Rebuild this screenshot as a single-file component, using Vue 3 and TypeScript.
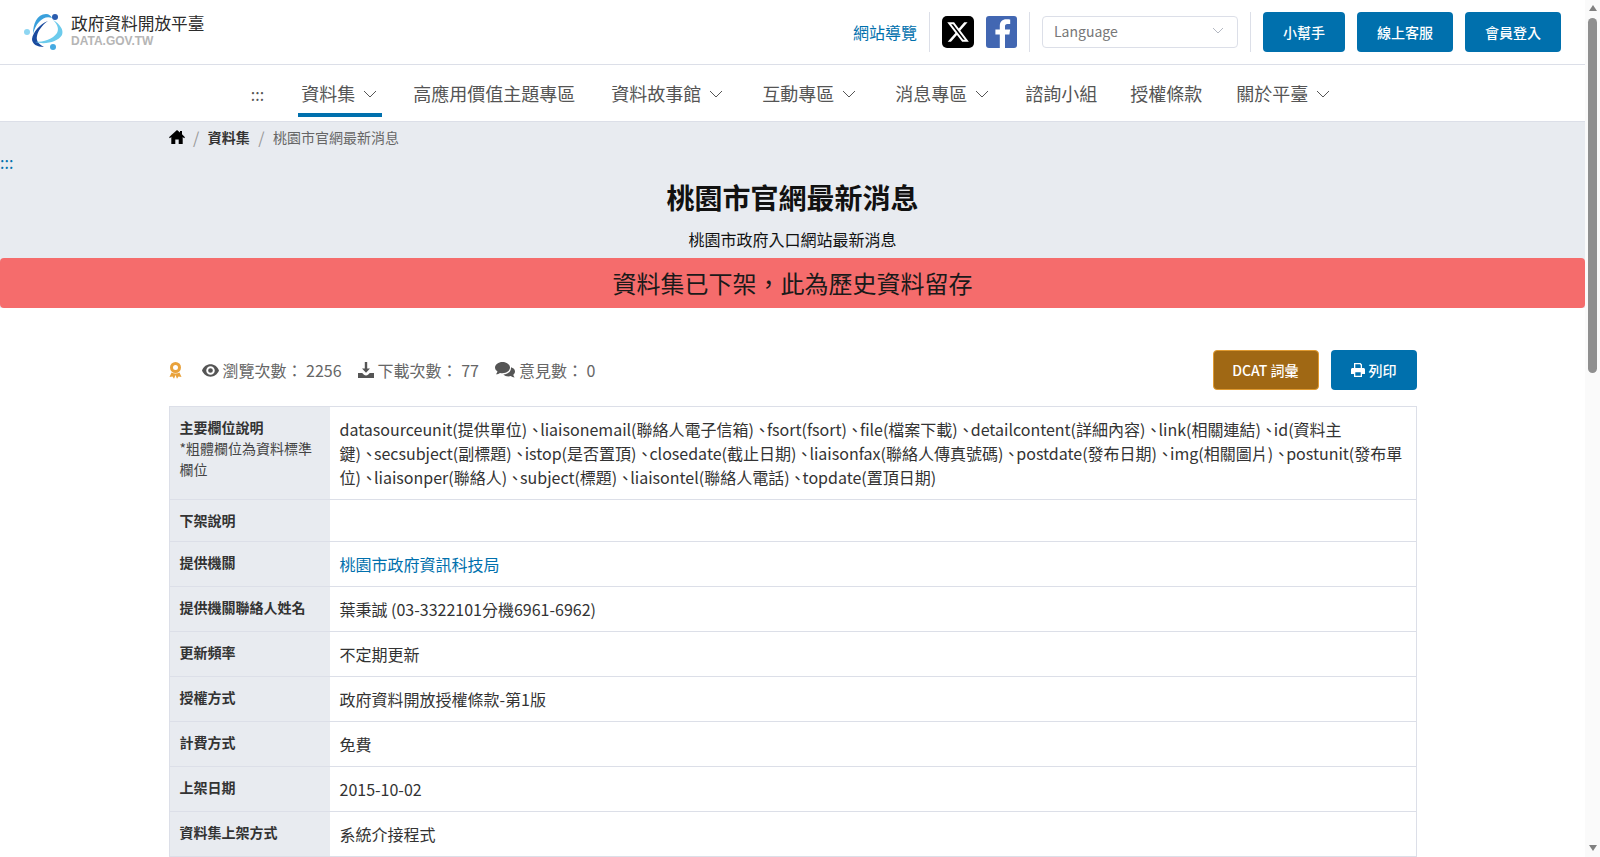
<script setup lang="ts">
type NavItem = { label: string; caret?: boolean; active?: boolean };
type Row = { label: string; value: string; link?: boolean };

const navItems: NavItem[] = [
  { label: '資料集', caret: true, active: true },
  { label: '高應用價值主題專區' },
  { label: '資料故事館', caret: true },
  { label: '互動專區', caret: true },
  { label: '消息專區', caret: true },
  { label: '諮詢小組' },
  { label: '授權條款' },
  { label: '關於平臺', caret: true },
];

// each line is split on the separator so its narrower width can be styled
const fieldLines: string[][] = [
  ['datasourceunit(提供單位)', 'liaisonemail(聯絡人電子信箱)', 'fsort(fsort)', 'file(檔案下載)', 'detailcontent(詳細內容)', 'link(相關連結)', 'id(資料主'],
  ['鍵)', 'secsubject(副標題)', 'istop(是否置頂)', 'closedate(截止日期)', 'liaisonfax(聯絡人傳真號碼)', 'postdate(發布日期)', 'img(相關圖片)', 'postunit(發布單'],
  ['位)', 'liaisonper(聯絡人)', 'subject(標題)', 'liaisontel(聯絡人電話)', 'topdate(置頂日期)'],
];

const rows: Row[] = [
  { label: '下架說明', value: '' },
  { label: '提供機關', value: '桃園市政府資訊科技局', link: true },
  { label: '提供機關聯絡人姓名', value: '葉秉誠 (03-3322101分機6961-6962)' },
  { label: '更新頻率', value: '不定期更新' },
  { label: '授權方式', value: '政府資料開放授權條款-第1版' },
  { label: '計費方式', value: '免費' },
  { label: '上架日期', value: '2015-10-02' },
  { label: '資料集上架方式', value: '系統介接程式' },
];
</script>

<template>
  <div class="window">
    <div class="page">
      <header class="topbar">
        <a class="logo">
          <svg class="logo-mark" viewBox="15 7 54 50" width="54" height="50">
            <path d="M33 34C33 24 37 14 46 14c3 0 5 2 6 4-5-2-9 0-13 4-3 3-5 8-6 12Z" fill="#3aa0dc" />
            <path d="M48 21c-8 3-15 11-16 18 0 5 5 8 12 8-6-3-8-7-7-11 1-5 5-11 11-15Z" fill="#1a4a9e" />
            <path d="M35 42c10 3 23 0 27-7 2-5-2-11-9-15 5 5 6 9 4 13-4 6-13 9-22 9Z" fill="#6ccbec" />
            <circle cx="55" cy="17" r="3" fill="#2a5cae" />
            <circle cx="27" cy="32" r="3" fill="#8ed6f2" />
            <circle cx="53" cy="47" r="3" fill="#45aae2" />
          </svg>
          <span class="logo-text">
            <span class="logo-name">政府資料開放平臺</span>
            <span class="logo-en">DATA.GOV.TW</span>
          </span>
        </a>
        <div class="top-actions">
          <a class="sitemap">網站導覽</a>
          <span class="divider"></span>
          <div class="socials">
            <svg width="32" height="32" viewBox="0 0 32 32">
              <rect width="32" height="32" rx="5" fill="#000" />
              <path transform="translate(4 4)" d="M18.244 2.250h3.308l-7.227 8.260 8.502 11.240H16.170l-5.214-6.817L4.990 21.750H1.680l7.730-8.835L1.254 2.250H8.080l4.713 6.231zm-1.161 17.520h1.833L7.084 4.126H5.117z" fill="#fff" />
            </svg>
            <svg width="31" height="32" viewBox="0 0 31 32">
              <rect width="31" height="32" rx="3" fill="#4267b2" />
              <path d="M19 32V18.500h4.400l.7-5H19v-3.200c0-1.500.4-2.400 2.500-2.400h2.700V3.400c-.5-.1-2-.2-3.900-.2-3.900 0-6.500 2.400-6.500 6.700v3.600H9.400v5h4.400V32H19Z" fill="#fff" />
            </svg>
          </div>
          <span class="divider"></span>
          <div class="lang">
            <span>Language</span>
            <svg width="12" height="7" viewBox="0 0 12 7"><path d="M1 1l5 5 5-5" fill="none" stroke="#b4b8c2" stroke-width="1" /></svg>
          </div>
          <span class="divider"></span>
          <div class="top-buttons">
            <a class="btn btn-small">小幫手</a>
            <a class="btn">線上客服</a>
            <a class="btn">會員登入</a>
          </div>
        </div>
      </header>

      <nav class="mainnav">
        <a class="accesskey nav-key">:::</a>
        <a v-for="item in navItems" :key="item.label" class="nav-item" :class="{ active: item.active, 'has-caret': item.caret }">
          {{ item.label }}
          <svg v-if="item.caret" class="caret" width="14" height="8" viewBox="0 0 14 8"><path d="M1 1l6 6 6-6" fill="none" stroke="#555" stroke-width="1" /></svg>
        </a>
      </nav>

      <section class="hero">
        <div class="container">
          <ol class="crumbs">
            <li>
              <svg class="home" width="16" height="14" viewBox="0 0 16 14"><path d="M8 0 0 7.200l.9 1L2.300 7v7h4V9.500h3.400V14h4V7l1.400 1.200.9-1L13 4.300V1h-2v1.500L8 0Z" fill="#000" /></svg>
            </li>
            <li class="sep">/</li>
            <li class="strong">資料集</li>
            <li class="sep">/</li>
            <li class="muted">桃園市官網最新消息</li>
          </ol>
        </div>
        <a class="accesskey hero-key">:::</a>
        <h1>桃園市官網最新消息</h1>
        <p class="subtitle">桃園市政府入口網站最新消息</p>
        <div class="alert">資料集已下架，此為歷史資料留存</div>
      </section>

      <main class="container content">
        <div class="meta">
          <div class="stats">
            <svg class="medal" width="13" height="17" viewBox="0 0 13 17">
              <circle cx="6.500" cy="5.500" r="4" fill="none" stroke="#e9a23b" stroke-width="3" />
              <path d="M2.500 10.500.5 15l3-.5 1.500 2.200L6.500 13 8 16.700l1.500-2.200 3 .5-2-4.500c-2.500 1.300-5.500 1.300-8 0Z" fill="#e9a23b" />
            </svg>
            <span class="stat">
              <svg width="17" height="13" viewBox="0 0 18 13"><path d="M9 0C5 0 1.800 2.400 0 6.500 1.800 10.600 5 13 9 13s7.200-2.400 9-6.500C16.200 2.400 13 0 9 0Zm0 11a4.500 4.500 0 1 1 0-9 4.500 4.500 0 0 1 0 9Zm0-7a2.500 2.500 0 1 0 0 5 2.500 2.500 0 0 0 0-5Z" fill="#555" /></svg>
              瀏覽次數： 2256
            </span>
            <span class="stat">
              <svg width="16" height="16" viewBox="0 0 16 16"><path d="M6.800 0h2.400v6.500H12L8 10.800 4 6.500h2.800V0ZM0 11h4.200L6 12.700c1 1 3 1 4 0l1.800-1.700H16v5H0v-5Z" fill="#555" /></svg>
              下載次數： 77
            </span>
            <span class="stat">
              <svg width="20" height="16" viewBox="0 0 20 16">
                <path d="M7.500 0C11.600 0 15 2.500 15 5.600s-3.400 5.600-7.500 5.600c-.9 0-1.700-.1-2.500-.3-1 .8-2.400 1.300-4 1.300.8-.9 1.300-1.800 1.500-2.700C.9 8.500 0 7.100 0 5.600 0 2.500 3.400 0 7.500 0Z" fill="#555" />
                <path d="M16 5.200c2.400.6 4 2.300 4 4.300 0 1.300-.7 2.500-1.800 3.300.2.900.7 1.700 1.400 2.700-1.500 0-2.900-.6-3.800-1.400-.7.200-1.500.3-2.300.3-2.100 0-4-.8-5.200-2 4.400-.1 8-2.800 7.700-7.200Z" fill="#555" />
              </svg>
              意見數： 0
            </span>
          </div>
          <div class="meta-buttons">
            <a class="btn btn-dcat">DCAT 詞彙</a>
            <a class="btn btn-print">
              <svg width="14" height="14" viewBox="0 0 14 14"><path d="M3 0h6.500L11 1.500V5h1.500c.8 0 1.500.7 1.500 1.500V11h-3v3H3v-3H0V6.500C0 5.700.7 5 1.500 5H3V0Zm1.300 1.300V5h5.400V2.200L8.800 1.300H4.300Zm0 8v3.400h5.400V9.300H4.300Z" fill="#fff" /></svg>
              列印
            </a>
          </div>
        </div>

        <div class="table">
          <div class="row">
            <div class="th"><strong>主要欄位說明</strong><span class="note">*粗體欄位為資料標準欄位</span></div>
            <div class="td">
              <div v-for="(line, i) in fieldLines" :key="i" class="field-line">
                <template v-for="(part, j) in line" :key="j"><span v-if="j > 0" class="comma">、</span>{{ part }}</template>
              </div>
            </div>
          </div>
          <div v-for="row in rows" :key="row.label" class="row">
            <div class="th"><strong>{{ row.label }}</strong></div>
            <div class="td" :class="{ link: row.link }">{{ row.value }}</div>
          </div>
        </div>
      </main>
    </div>

    <div class="scrollbar">
      <span class="arrow"></span>
      <span class="thumb"></span>
      <span class="arrow arrow-down"></span>
    </div>
  </div>
</template>

<style>
html, body {
  margin: 0;
  background: #fff;
  overflow: hidden;
}
</style>

<style scoped>
.window {
  display: flex;
  height: 857px;
  overflow: hidden;
}
.page {
  flex: 1;
  min-width: 0;
  font-family: "Noto Sans CJK TC", "Noto Sans", sans-serif;
  color: #222;
}
a { text-decoration: none; }

.scrollbar {
  flex: 0 0 15px;
  background: #fafafa;
  display: flex;
  flex-direction: column;
  align-items: center;
}
.arrow {
  margin-top: 5px;
  width: 0;
  height: 0;
  border-left: 4.500px solid transparent;
  border-right: 4.500px solid transparent;
  border-bottom: 6px solid #808080;
}
.arrow-down {
  margin-top: auto;
  margin-bottom: 6px;
  border-bottom: 0;
  border-top: 6px solid #808080;
}
.thumb {
  margin-top: 7px;
  width: 9px;
  height: 355px;
  background: #8f8f8f;
  border-radius: 5px;
}

.topbar {
  height: 65px;
  box-sizing: border-box;
  border-bottom: 1px solid #dcdfe8;
  display: flex;
  align-items: center;
  justify-content: space-between;
  padding: 0 24px 0 15px;
}
.logo { display: flex; align-items: center; }
.logo-mark { margin-right: 2px; }
.logo-text { display: flex; flex-direction: column; padding-bottom: 5px; }
.logo-name { font-size: 16.700px; line-height: 20px; color: #2b2b2b; }
.logo-en { font-family: "Liberation Sans", sans-serif; font-weight: 700; font-size: 12px; line-height: 12px; margin-top: 2px; color: #b5b5b5; }

.top-actions { display: flex; align-items: center; }
.sitemap { color: #0070ad; font-size: 16px; }
.divider { width: 1px; height: 40px; background: #dcdfe8; margin: 0 12px; }
.socials { display: flex; gap: 12px; }
.socials svg { display: block; }
.lang {
  width: 196px;
  height: 32px;
  box-sizing: border-box;
  border: 1px solid #dcdfe8;
  border-radius: 4px;
  display: flex;
  align-items: center;
  justify-content: space-between;
  padding: 0 13px 3px 11px;
  color: #777;
  font-size: 14px;
}
.top-buttons { display: flex; gap: 12px; }
.btn {
  display: inline-flex;
  align-items: center;
  justify-content: center;
  gap: 4px;
  height: 40px;
  padding: 0 20px;
  box-sizing: border-box;
  background: #0070ad;
  color: #fff;
  border-radius: 4px;
  font-size: 14px;
  font-weight: 500;
}

.mainnav {
  height: 57px;
  box-sizing: border-box;
  border-bottom: 1px solid #dcdfe8;
  display: flex;
  justify-content: center;
  align-items: flex-start;
  gap: 27px;
  padding-left: 2px;
}
.accesskey { color: #555; }
.nav-key { height: 52px; display: flex; align-items: center; font-size: 16px; padding-top: 6px; box-sizing: border-box; margin-right: 4px; }
.nav-item {
  display: flex;
  align-items: center;
  gap: 8px;
  height: 52px;
  padding: 8px 3px 0;
  font-size: 18px;
  color: #555;
  border-bottom: 4px solid transparent;
  box-sizing: border-box;
}
.nav-item.has-caret { margin: 0 1px 0 3px; padding-right: 5px; }
.nav-item.has-caret:last-child { margin-left: 1px; }
.nav-item.active { border-bottom-color: #0070ad; }
.caret { margin-top: 1px; }

.hero {
  background: #e8ebf0;
  text-align: center;
}
.container {
  width: 1280px;
  box-sizing: border-box;
  padding: 0 16px;
  margin: 0 auto;
}
.crumbs {
  list-style: none;
  margin: 0 0 3px;
  padding: 0;
  height: 29px;
  display: flex;
  align-items: center;
  gap: 8.500px;
  font-size: 14px;
}
.home { display: block; }
.sep { color: #999; font-size: 16px; }
.strong { font-weight: 700; color: #333; }
.muted { color: #666; }
.hero-key { display: block; text-align: left; color: #0070ad; font-size: 16px; line-height: 16px; height: 16px; }
h1 {
  margin: 6px 0 0;
  font-size: 28px;
  line-height: 42px;
  color: #111;
  font-weight: 700;
}
.subtitle {
  margin: 9px 0 0;
  font-size: 16px;
  line-height: 24px;
  color: #111;
}
.alert {
  margin-top: 7px;
  height: 50px;
  line-height: 50px;
  background: #f56c6c;
  border-radius: 4px;
  font-size: 24px;
  color: #1a1a1a;
}

.content { padding-top: 42px; }
.meta { display: flex; align-items: center; justify-content: space-between; }
.stats { display: flex; align-items: center; color: #666; font-size: 16px; gap: 16px; }
.medal { margin-right: 4px; }
.stat { display: inline-flex; align-items: center; gap: 4px; }
.meta-buttons { display: flex; gap: 12px; }
.btn-dcat { background: #a06814; border: 1px solid #e09a30; padding: 0 19px 0 18.500px; }
.btn-print { padding: 0 20px; }

.table {
  margin-top: 16px;
  border: 1px solid #dcdfe8;
  border-bottom: 0;
}
.row { display: flex; border-bottom: 1px solid #dcdfe8; }
.th {
  flex: 0 0 160px;
  box-sizing: border-box;
  background: #e8ebf0;
  padding: 9.500px 10px 10.500px;
  font-size: 14px;
  line-height: 21px;
  color: #333;
}
.th strong { display: block; font-weight: 700; }
.note { display: block; color: #444; }
.td {
  flex: 1;
  padding: 9.500px 10px 10.500px;
  font-size: 16px;
  line-height: 24px;
  color: #333;
}
.td.link { color: #0070ad; }
.field-line { white-space: nowrap; }
.comma { letter-spacing: -3px; }
</style>
